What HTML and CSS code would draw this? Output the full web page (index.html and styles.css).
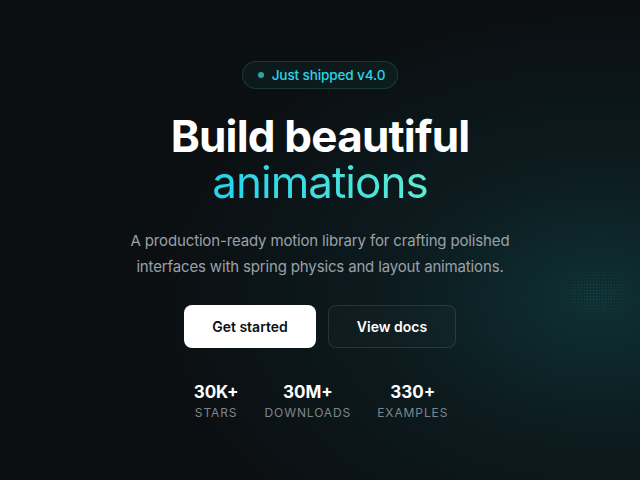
FILE: index.html
```html
<!DOCTYPE html>
<html lang="en">
<head>
<meta charset="utf-8">
<title>Motion</title>
<link rel="stylesheet" href="styles.css">
</head>
<body>
<main class="hero">
  <div class="dots"></div>
  <div class="content">
    <div class="badge"><span class="dot"></span>Just shipped v4.0</div>
    <h1 class="title"><span class="line1">Build beautiful</span><span class="line2">animations</span></h1>
    <p class="lead">A production-ready motion library for crafting polished interfaces with spring physics and layout animations.</p>
    <div class="actions">
      <a class="btn btn-primary" href="#">Get started</a>
      <a class="btn btn-ghost" href="#">View docs</a>
    </div>
    <ul class="stats">
      <li class="stat"><span class="num">30K+</span><span class="label">Stars</span></li>
      <li class="stat"><span class="num">30M+</span><span class="label">Downloads</span></li>
      <li class="stat"><span class="num">330+</span><span class="label">Examples</span></li>
    </ul>
  </div>
</main>
</body>
</html>
```
FILE: styles.css
```css
* { box-sizing: border-box; }
html, body { margin: 0; padding: 0; }
body {
  width: 640px;
  height: 480px;
  overflow: hidden;
  background: #0b0f12;
  font-family: Inter, "Noto Sans", sans-serif;
  color: #fff;
}
.hero {
  position: relative;
  width: 640px;
  height: 480px;
  overflow: hidden;
  background:
    radial-gradient(ellipse 440px 290px at 600px 300px, rgba(15, 52, 56, 0.9) 0%, rgba(13, 38, 42, 0.55) 45%, rgba(11, 15, 18, 0) 100%),
    #0b0f12;
}
.dots {
  position: absolute;
  left: 550px;
  top: 262px;
  width: 90px;
  height: 60px;
  background-image: radial-gradient(circle, rgba(94, 234, 212, 0.14) 0.6px, transparent 0.9px);
  background-size: 3px 3px;
  -webkit-mask-image: radial-gradient(ellipse closest-side, #000 20%, transparent 100%);
  mask-image: radial-gradient(ellipse closest-side, #000 20%, transparent 100%);
}
.content {
  position: relative;
  display: flex;
  flex-direction: column;
  align-items: center;
  padding-top: 61px;
}
.badge {
  display: flex;
  align-items: center;
  gap: 8px;
  height: 28px;
  padding: 0 12px 0 15px;
  border: 1px solid rgba(45, 212, 191, 0.18);
  border-radius: 14px;
  background: rgba(20, 60, 60, 0.25);
  color: #2ed3e6;
  font-size: 13.6px;
  font-weight: 500;
  letter-spacing: -0.15px;
}
.dot {
  width: 6px;
  height: 6px;
  border-radius: 50%;
  background: #2aa7a3;
}
.title {
  margin: 24px 0 0;
  display: flex;
  flex-direction: column;
  align-items: center;
  font-size: 44px;
  line-height: 46px;
  letter-spacing: -0.8px;
}
.line1 { font-weight: 700; color: #fff; }
.line2 {
  font-weight: 400;
  letter-spacing: -1px;
  background: linear-gradient(90deg, #22d3ee 0%, #5eead4 100%);
  -webkit-background-clip: text;
  background-clip: text;
  color: transparent;
}
.lead {
  margin: 23px 0 0;
  width: 420px;
  text-align: center;
  font-size: 15px;
  line-height: 26px;
  letter-spacing: -0.15px;
  color: #9aa1a8;
}
.actions {
  display: flex;
  gap: 12px;
  margin-top: 25px;
}
.btn {
  display: flex;
  align-items: center;
  justify-content: center;
  width: 132px;
  height: 43px;
  border-radius: 8px;
  font-size: 14px;
  font-weight: 600;
  text-decoration: none;
}
.btn-primary { background: #fff; color: #0b0f12; }
.btn-ghost {
  width: 128px;
  border: 1px solid rgba(255, 255, 255, 0.1);
  background: rgba(255, 255, 255, 0.02);
  color: #fff;
}
.stats {
  list-style: none;
  margin: 33px 0 0;
  padding: 0;
  display: flex;
  gap: 26px;
  transform: translateX(1px);
}
.stat {
  display: flex;
  flex-direction: column;
  align-items: center;
}
.num {
  font-size: 17px;
  font-weight: 700;
  line-height: 22px;
}
.label {
  margin-top: 2px;
  font-size: 12px;
  line-height: 16px;
  letter-spacing: 0.9px;
  text-transform: uppercase;
  color: #7d868e;
}
```
